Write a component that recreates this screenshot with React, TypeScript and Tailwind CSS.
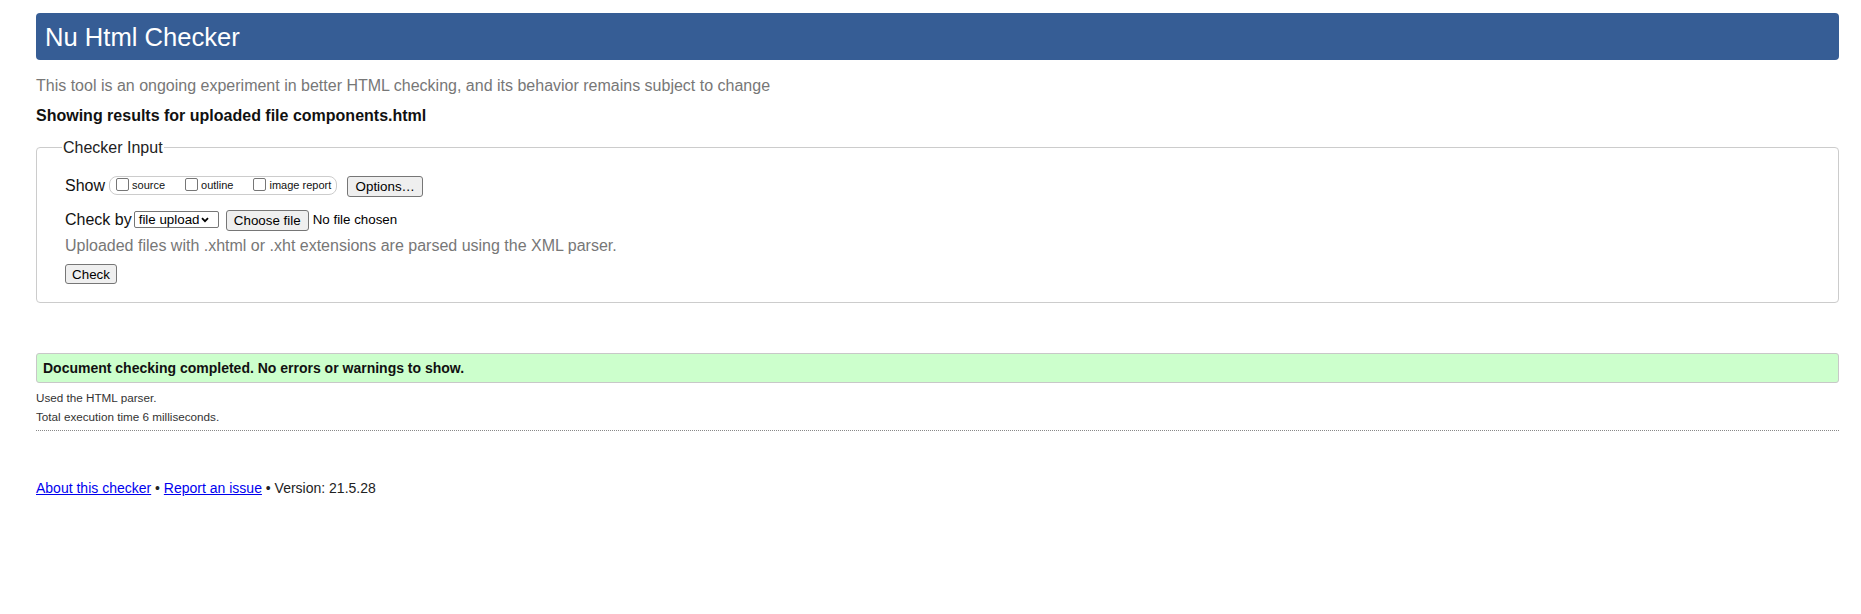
import React from "react";

function Box() {
  return (
    <span className="mb-[2px] inline-block h-[13px] w-[13px] shrink-0 rounded-[2px] border border-[#767676] bg-white" />
  );
}

function Btn({ children, w, h }: { children: React.ReactNode; w: string; h: string }) {
  return (
    <span
      className={`inline-flex shrink-0 items-center justify-center rounded-[3px] border border-[#767676] bg-[#efefef] text-[13.33px] leading-[15px] text-black ${w} ${h}`}
    >
      {children}
    </span>
  );
}

export default function App() {
  return (
    <div className="min-h-[614px] bg-white pl-[36px] pr-[22px] pt-[13px] font-['Liberation_Sans',Arial,sans-serif] text-[#222]">
      <h1 className="flex h-[47px] items-center rounded-[4px] bg-[#365d95] pl-[9px] text-[25.6px] font-normal leading-[30px] text-white">
        Nu Html Checker
      </h1>
      <p className="mt-[17px] text-[16px] leading-[18px] text-[#777]">
        This tool is an ongoing experiment in better HTML checking, and its behavior remains subject to change
      </p>
      <p className="mt-[12px] text-[16px] font-bold leading-[18px] text-[#111]">
        Showing results for uploaded file components.html
      </p>

      <fieldset className="mt-[13px] rounded-[4px] border border-[#ccc] pb-[18px] pl-[28px] pr-[28px] pt-[18px]">
        <legend className="-ml-[3px] px-[1px] text-[16px] leading-[19px] text-[#222]">Checker Input</legend>

        <div className="flex h-[21px] items-center">
          <span className="text-[16px] leading-[18px] text-[#111]">Show</span>
          <div className="ml-[4px] flex h-[19px] items-center rounded-[8px] border border-[#ccc] pl-[6px] pr-[5px]">
            <Box />
            <span className="ml-[3px] text-[11px] leading-[13px] text-[#111]">source</span>
            <span className="ml-[20px] flex items-center">
              <Box />
            </span>
            <span className="ml-[3px] text-[11px] leading-[13px] text-[#111]">outline</span>
            <span className="ml-[20px] flex items-center">
              <Box />
            </span>
            <span className="ml-[3px] text-[11px] leading-[13px] text-[#111]">image report</span>
          </div>
          <span className="ml-[10px]">
            <Btn w="w-[76px]" h="h-[21px]">
              Options…
            </Btn>
          </span>
        </div>

        <div className="mt-[13px] flex h-[21px] items-center">
          <span className="text-[16px] leading-[18px] text-[#111]">Check by</span>
          <span className="ml-[2px] flex h-[17px] w-[85px] items-center justify-between rounded-[2px] border border-[#767676] bg-white pl-[4px] pr-[9px] text-[13.33px] leading-[15px] text-black">
            <span>file upload</span>
            <svg width="8" height="6" viewBox="0 0 8 6" className="shrink-0">
              <path d="M1 1.2 L4 4.2 L7 1.2" fill="none" stroke="#000" strokeWidth="1.8" />
            </svg>
          </span>
          <span className="ml-[7px]">
            <Btn w="w-[83px]" h="h-[21px]">
              Choose file
            </Btn>
          </span>
          <span className="ml-[4px] text-[13.33px] leading-[15px] text-black">No file chosen</span>
        </div>

        <p className="mt-[7px] text-[16px] leading-[18px] text-[#777]">
          Uploaded files with .xhtml or .xht extensions are parsed using the XML parser.
        </p>

        <div className="mt-[9px] flex">
          <Btn w="w-[52px]" h="h-[20px]">
            Check
          </Btn>
        </div>
      </fieldset>

      <div className="mt-[50px] rounded-[3px] border border-[#c8c8c8] bg-[#ccffcc] px-[6px] py-[6px] text-[14px] font-bold leading-[16px] text-[#111]">
        Document checking completed. No errors or warnings to show.
      </div>
      <p className="mt-[5px] text-[11.7px] leading-[19px] text-[#333]">Used the HTML parser.</p>
      <p className="text-[11.7px] leading-[19px] text-[#333]">Total execution time 6 milliseconds.</p>
      <div className="mt-[4px] border-t border-dotted border-[#888]" />

      <p className="mt-[49px] text-[14px] leading-[16px] text-[#222]">
        <a className="text-[#0000ee] underline">About this checker</a>
        {" • "}
        <a className="text-[#0000ee] underline">Report an issue</a>
        {" • Version: 21.5.28"}
      </p>
    </div>
  );
}
